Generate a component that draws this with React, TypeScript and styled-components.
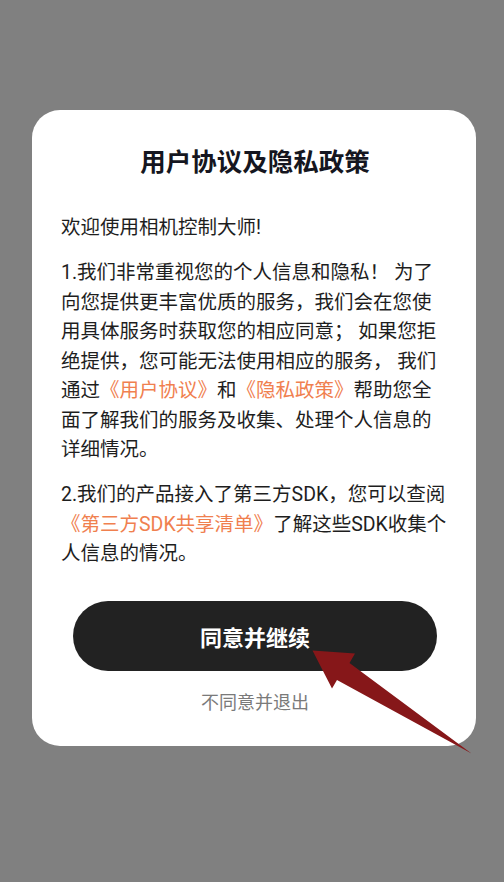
import React from "react";
import styled, { createGlobalStyle } from "styled-components";

const Global = createGlobalStyle`
  html, body { margin: 0; padding: 0; background: #808080; }
  body { font-family: Roboto, "Noto Sans CJK SC", sans-serif; }
`;

const Screen = styled.div`
  position: relative;
  width: 504px;
  height: 882px;
  background: #808080;
  padding: 110px 28px 0 32px;
  box-sizing: border-box;
  overflow: hidden;
`;

const Card = styled.div`
  background: #ffffff;
  border-radius: 28px;
  padding: 32px 27px 30px 29px;
  display: flex;
  flex-direction: column;
`;

const Title = styled.h1`
  margin: 0;
  font-size: 25.5px;
  line-height: 40px;
  font-weight: 700;
  color: #151620;
  text-align: center;
`;

const Body = styled.div`
  margin-top: 31px;
  display: flex;
  flex-direction: column;
  gap: 15.5px;
`;

const Para = styled.p`
  margin: 0;
  font-size: 19.5px;
  line-height: 29.5px;
  color: #1e1e1e;
  word-break: break-all;
`;

const Link = styled.span`
  color: #f0804f;
`;

const Actions = styled.div`
  margin-top: 32.5px;
  display: flex;
  flex-direction: column;
  align-items: center;
  gap: 19px;
`;

const PrimaryButton = styled.button`
  width: 364px;
  height: 70px;
  border: none;
  border-radius: 35px;
  background: #222222;
  color: #ffffff;
  font-family: inherit;
  font-size: 22px;
  font-weight: 700;
  cursor: pointer;
`;

const SecondaryButton = styled.button`
  border: none;
  background: none;
  padding: 0;
  color: #7a7a7a;
  font-family: inherit;
  font-size: 18px;
  line-height: 26px;
  cursor: pointer;
`;

const Arrow = styled.svg`
  position: absolute;
  left: 0;
  top: 0;
  pointer-events: none;
`;

export default function App() {
  return (
    <Screen>
      <Global />
      <Card>
        <Title>用户协议及隐私政策</Title>
        <Body>
          <Para>欢迎使用相机控制大师!</Para>
          <Para>
            1.我们非常重视您的个人信息和隐私！ 为了向您提供更丰富优质的服务，我们会在您使用具体服务时获取您的相应同意； 如果您拒绝提供，您可能无法使用相应的服务， 我们通过
            <Link>《用户协议》</Link>和<Link>《隐私政策》</Link>
            帮助您全面了解我们的服务及收集、处理个人信息的详细情况。
          </Para>
          <Para>
            2.我们的产品接入了第三方SDK，您可以查阅
            <Link>《第三方SDK共享清单》</Link>
            了解这些SDK收集个人信息的情况。
          </Para>
        </Body>
        <Actions>
          <PrimaryButton>同意并继续</PrimaryButton>
          <SecondaryButton>不同意并退出</SecondaryButton>
        </Actions>
      </Card>
      <Arrow width="504" height="882" viewBox="0 0 504 882">
        <polygon
          points="312.5,650.5 355,653.5 349.5,663 471.5,753.5 337,680 332,688.5"
          fill="#861719"
        />
      </Arrow>
    </Screen>
  );
}
